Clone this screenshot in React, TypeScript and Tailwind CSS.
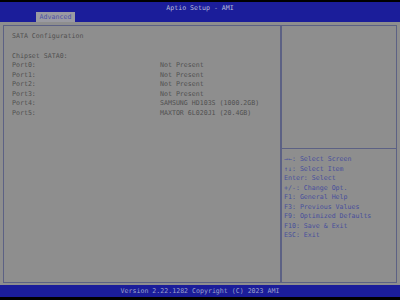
import React from "react";

const ports: [string, string][] = [
  ["Port0:", "Not Present"],
  ["Port1:", "Not Present"],
  ["Port2:", "Not Present"],
  ["Port3:", "Not Present"],
  ["Port4:", "SAMSUNG HD103S (1000.2GB)"],
  ["Port5:", "MAXTOR 6L020J1 (20.4GB)"],
];

const help = [
  "\u2192\u2190: Select Screen",
  "\u2191\u2193: Select Item",
  "Enter: Select",
  "+/-: Change Opt.",
  "F1: General Help",
  "F3: Previous Values",
  "F9: Optimized Defaults",
  "F10: Save & Exit",
  "ESC: Exit",
];

export default function App() {
  return (
    <div
      className="w-[400px] h-[300px] bg-black flex flex-col overflow-hidden text-[6.6px] leading-[9.5px]"
      style={{ fontFamily: '"DejaVu Sans Mono", "Liberation Mono", monospace' }}
    >
      {/* header */}
      <div className="mt-[2px] h-[20px] bg-[#1b1d9a] relative">
        <div className="text-center text-[#b8bcd8] pt-[2px]">Aptio Setup - AMI</div>
        <div className="absolute left-[36px] top-[10px] w-[39px] h-[10px] bg-[#9a9aa2] text-[#4c52a6] text-center leading-[10px]">
          Advanced
        </div>
      </div>

      {/* body */}
      <div className="h-[263px] bg-[#8e8e8e] px-[3px] pt-[3px] pb-[2px]">
        <div className="h-full border border-[#5c6184] flex">
          <div className="w-[278px] border-r-2 border-[#5c6184] pl-[8px] pt-[6px] text-[#505050]">
            <div>SATA Configuration</div>
            <div className="mt-[10px]">Chipset SATA0:</div>
            {ports.map(([k, v]) => (
              <div key={k} className="flex">
                <div className="w-[148px]">{k}</div>
                <div>{v}</div>
              </div>
            ))}
          </div>
          <div className="flex-1 flex flex-col">
            <div className="h-[123px] border-b border-[#5c6184]" />
            <div className="pl-[2px] pt-[6px] text-[#484e9c]">
              {help.map((h) => (
                <div key={h}>{h}</div>
              ))}
            </div>
          </div>
        </div>
      </div>

      {/* footer */}
      <div className="h-[12px] bg-[#1b1d9a] text-center text-[#9ea2cc] leading-[12px]">
        Version 2.22.1282 Copyright (C) 2023 AMI
      </div>
    </div>
  );
}
